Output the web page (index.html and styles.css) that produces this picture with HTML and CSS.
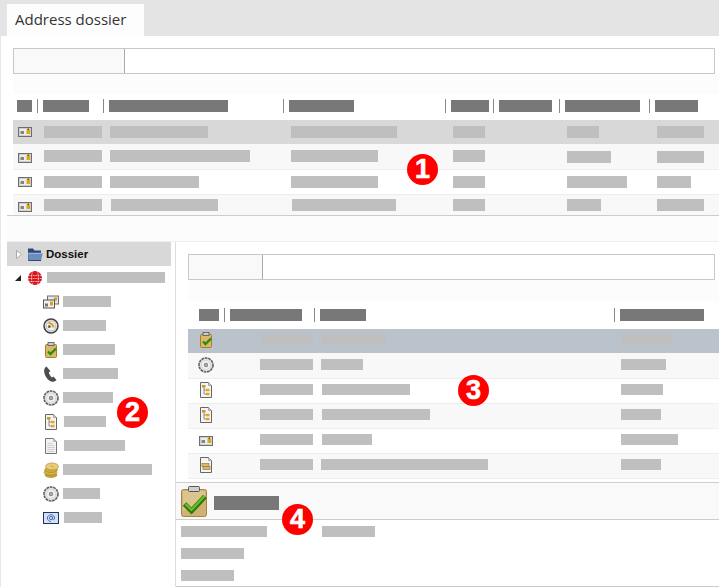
FILE: index.html

```html
<!DOCTYPE html>
<html lang="en">
<head>
  <meta charset="UTF-8" />
  <title>Address dossier</title>
  <link rel="stylesheet" href="styles.css">
</head>
<body>

  <svg class="defs" width="0" height="0">
    <symbol id="card" viewBox="0 0 14 10">
      <rect x="0.5" y="0.5" width="13" height="9" fill="#ececec" stroke="#6e6e6e"/>
      <rect x="1.500" y="1.500" width="11" height="7" fill="none" stroke="#bbb" stroke-width="0.6"/>
      <rect x="2.500" y="4" width="3.500" height="3" fill="#858585"/>
      <rect x="8.500" y="2.500" width="3.500" height="4.500" fill="#dca814"/>
      <rect x="9.500" y="1.500" width="1.500" height="1.500" fill="#5e5020"/>
    </symbol>
    <symbol id="cards" viewBox="0 0 16 13">
      <rect x="4.5" y="0.5" width="11" height="8" fill="#e6e6e6" stroke="#6e6e6e"/>
      <rect x="11" y="2" width="3" height="3" fill="#c9a030"/>
      <rect x="0.5" y="4.5" width="11" height="8" fill="#f0f0f0" stroke="#555"/>
      <rect x="2" y="8" width="3" height="3" fill="#777"/>
      <rect x="7" y="6" width="3" height="4" fill="#d9a514"/>
    </symbol>
    <symbol id="clock" viewBox="0 0 16 16">
      <circle cx="8" cy="8" r="7" fill="#e2e2e2" stroke="#444" stroke-width="1.500"/>
      <circle cx="8" cy="8" r="4.800" fill="#f2f2f2" stroke="#aaa" stroke-width="0.6"/>
      <path d="M5.500 5a5 5 0 0 1 5 4.500" fill="none" stroke="#e09a10" stroke-width="2"/>
      <circle cx="6.300" cy="8.600" r="1.500" fill="#6a6a6a"/>
    </symbol>
    <symbol id="clip" viewBox="0 0 16 16">
      <rect x="2.5" y="2.5" width="11" height="13" rx="1" fill="#d9b869" stroke="#a97f24"/>
      <rect x="5" y="0.5" width="6" height="3" fill="#ccc" stroke="#555" stroke-width="0.8"/>
      <path d="M5 9.500l2.500 2.500 5.500-5.500" fill="none" stroke="#2f8a14" stroke-width="2.400"/>
    </symbol>
    <symbol id="phone" viewBox="0 0 16 16">
      <path d="M3.500 0.500c-1.800 1-2.800 3-2.200 6C2 10.200 4.500 14 8 15.500c2.200.7 4.200 0 5.500-1.500L10.500 10.500 8.800 11.400C7.300 10.200 6.200 8.300 5.800 6.300L7.500 5.300z" fill="#4d4d4d"/>
    </symbol>
    <symbol id="disc" viewBox="0 0 16 16">
      <circle cx="8" cy="8" r="7" fill="#e4e4e4" stroke="#5f5f5f" stroke-width="1.600" stroke-dasharray="2.800 .7"/>
      <circle cx="8" cy="8" r="4.600" fill="#f0f0f0" stroke="#ccc" stroke-width="0.6"/>
      <circle cx="8" cy="8" r="2.200" fill="#8a8a8a"/>
      <circle cx="8" cy="8" r="0.800" fill="#ddd"/>
    </symbol>
    <symbol id="doctree" viewBox="0 0 16 16">
      <path d="M2.500.5h8l3 3v12h-11z" fill="#f4f4f4" stroke="#666"/>
      <path d="M10.500.5v3h3" fill="#ccc" stroke="#888" stroke-width="0.6"/>
      <path d="M6 4v8h3M6 8h3" fill="none" stroke="#777" stroke-width="0.8"/>
      <rect x="4" y="3" width="3.500" height="2.500" fill="#c9982a"/>
      <rect x="8" y="6.800" width="3.500" height="2.500" fill="#e0a81e"/>
      <rect x="8" y="10.800" width="3.500" height="2.500" fill="#e0a81e"/>
    </symbol>
    <symbol id="doc" viewBox="0 0 16 16">
      <path d="M2.500.5h8l3 3v12h-11z" fill="#f2f2f2" stroke="#777"/>
      <path d="M10.500.5v3h3" fill="#ccc" stroke="#999" stroke-width="0.6"/>
      <path d="M4.500 5.500h5M4.500 7.500h7M4.500 9.500h7M4.500 11.500h7M4.500 13.500h7" stroke="#c4c4c4" stroke-width="0.8"/>
    </symbol>
    <symbol id="docfolder" viewBox="0 0 16 16">
      <path d="M2.500.5h8l3 3v12h-11z" fill="#f4f4f4" stroke="#666"/>
      <path d="M10.500.5v3h3" fill="#ccc" stroke="#888" stroke-width="0.6"/>
      <rect x="4" y="6.500" width="7" height="3" fill="#d6b978" stroke="#9a7a30" stroke-width="0.7"/>
      <rect x="5" y="9.500" width="7" height="3" fill="#d6b978" stroke="#9a7a30" stroke-width="0.7"/>
    </symbol>
    <symbol id="coins" viewBox="0 0 16 16">
      <ellipse cx="8" cy="13" rx="6" ry="2.500" fill="#c7a030" stroke="#a8852a" stroke-width="0.6"/>
      <ellipse cx="7.500" cy="10.500" rx="6.500" ry="2.500" fill="#d6b44a" stroke="#a8852a" stroke-width="0.6"/>
      <ellipse cx="8" cy="8" rx="6.500" ry="2.500" fill="#d0ac3c" stroke="#a8852a" stroke-width="0.6"/>
      <ellipse cx="9" cy="4.500" rx="6.500" ry="3.500" fill="#e6cc78" stroke="#a8852a" stroke-width="0.6"/>
      <path d="M8 3.500l2 2" stroke="#b8962f"/>
    </symbol>
    <symbol id="mail" viewBox="0 0 16 12">
      <rect x="0.500" y="0.500" width="15" height="11" fill="#d5e0f2" stroke="#1d3566"/>
      <circle cx="8" cy="6" r="1.600" fill="none" stroke="#4a6fb0"/>
      <path d="M9.600 4.500v2.500c0 1 2 1 2-.8 0-2.200-1.700-3.500-3.600-3.500S4.400 4 4.400 6s1.700 3.500 3.600 3.500" fill="none" stroke="#4a6fb0"/>
    </symbol>
    <symbol id="folder" viewBox="0 0 16 14">
      <path d="M1 1.500h5l1.500 2H14v10H1z" fill="#2f4a78"/>
      <path d="M1 6h14.800L14 13.500H1.500z" fill="#6b8cbd"/>
      <path d="M1.500 6.300h13.800" stroke="#a9c0e0"/>
      <path d="M1.500 13.500H14" stroke="#2f4a78"/>
    </symbol>
    <symbol id="globe" viewBox="0 0 14 14">
      <circle cx="7" cy="7" r="7" fill="#d8141c"/>
      <path d="M0 4.500h14M0 7.500h14M0 10.500h14M4.700 0c-1.500 4-1.500 10 0 14M9.300 0c1.500 4 1.500 10 0 14" fill="none" stroke="#fff" stroke-width="0.6" stroke-dasharray="1.800 .6"/>
    </symbol>
    <symbol id="clipbig" viewBox="0 0 26 31">
      <rect x="0.500" y="3.500" width="25" height="27" rx="2" fill="#cfb170" stroke="#a5854a"/>
      <path d="M2 5h22v10L2 25z" fill="#dcc48e"/>
      <rect x="7.500" y="0.500" width="11" height="5" rx="1" fill="#cfcfcf" stroke="#555"/>
      <path d="M3.500 18l7 7L24 10.500" fill="none" stroke="#2c7a10" stroke-width="5"/>
      <path d="M4.500 18l6 6L23.500 10" fill="none" stroke="#6cc024" stroke-width="2.200"/>
    </symbol>
  </svg>

  <div class="tabs"><div class="tab">Address dossier</div></div>

  <div class="content">

    <div class="top-panel">
      <div class="filter"><div class="filter-label"></div></div>
      <div class="band"></div>
      <div class="head head-top">
        <div class="hcell"><i class="hbar" style="width:15px"></i></div>
        <div class="hcell"><i class="hbar" style="width:46px"></i></div>
        <div class="hcell"><i class="hbar" style="width:119px"></i></div>
        <div class="hcell"><i class="hbar" style="width:65px"></i></div>
        <div class="hcell"><i class="hbar" style="width:38px"></i></div>
        <div class="hcell"><i class="hbar" style="width:53px"></i></div>
        <div class="hcell"><i class="hbar" style="width:75px"></i></div>
        <div class="hcell"><i class="hbar" style="width:43px"></i></div>
      </div>
      <div class="table-top">
        <div class="row row-sel">
          <svg class="ico-card"><use href="#card"/></svg>
          <i class="bar" style="width:58px"></i><i class="bar" style="width:98px"></i><i class="bar" style="width:106px"></i>
          <i class="bar" style="width:32px"></i><i class="bar" style="width:32px"></i><i class="bar" style="width:47px"></i>
        </div>
        <div class="row row-alt">
          <svg class="ico-card low"><use href="#card"/></svg>
          <i class="bar" style="width:58px"></i><i class="bar" style="width:140px"></i><i class="bar" style="width:87px"></i>
          <i class="bar" style="width:32px"></i><i class="bar down" style="width:44px"></i><i class="bar down" style="width:47px"></i>
        </div>
        <div class="row">
          <svg class="ico-card"><use href="#card"/></svg>
          <i class="bar" style="width:58px"></i><i class="bar" style="width:89px"></i><i class="bar" style="width:87px"></i>
          <i class="bar" style="width:32px"></i><i class="bar" style="width:60px"></i><i class="bar" style="width:34px"></i>
        </div>
        <div class="row row-alt row-last">
          <svg class="ico-card low"><use href="#card"/></svg>
          <i class="bar" style="width:58px"></i><i class="bar nudge" style="width:107px"></i><i class="bar nudge" style="width:104px"></i>
          <i class="bar" style="width:32px"></i><i class="bar" style="width:34px"></i><i class="bar" style="width:47px"></i>
        </div>
      </div>
    </div>

    <div class="gap"></div>

    <div class="split">
      <div class="tree">
        <div class="tree-root">
          <svg class="tri-open" viewBox="0 0 6 9"><path d="M.5.500l5 4-5 4z" fill="#fff" stroke="#aaa"/></svg>
          <svg class="ico-folder"><use href="#folder"/></svg>
          <span class="tree-title">Dossier</span>
        </div>
        <div class="tree-site">
          <svg class="tri-down" viewBox="0 0 6 6"><path d="M6 0v6H0z" fill="#222"/></svg>
          <svg class="ico-globe"><use href="#globe"/></svg>
          <i class="tbar bar-site" style="width:118px"></i>
        </div>
        <div class="tree-item"><svg class="ico"><use href="#cards"/></svg><i class="tbar" style="width:48px"></i></div>
        <div class="tree-item"><svg class="ico"><use href="#clock"/></svg><i class="tbar" style="width:43px"></i></div>
        <div class="tree-item"><svg class="ico"><use href="#clip"/></svg><i class="tbar" style="width:52px"></i></div>
        <div class="tree-item"><svg class="ico"><use href="#phone"/></svg><i class="tbar" style="width:55px"></i></div>
        <div class="tree-item"><svg class="ico"><use href="#disc"/></svg><i class="tbar" style="width:50px"></i></div>
        <div class="tree-item"><svg class="ico"><use href="#doctree"/></svg><i class="tbar nudge" style="width:42px"></i></div>
        <div class="tree-item"><svg class="ico"><use href="#doc"/></svg><i class="tbar nudge" style="width:61px"></i></div>
        <div class="tree-item"><svg class="ico"><use href="#coins"/></svg><i class="tbar" style="width:89px"></i></div>
        <div class="tree-item"><svg class="ico"><use href="#disc"/></svg><i class="tbar" style="width:37px"></i></div>
        <div class="tree-item"><svg class="ico"><use href="#mail"/></svg><i class="tbar nudge" style="width:38px"></i></div>
      </div>

      <div class="detail">
        <div class="detail-top">
          <div class="filter filter-detail"><div class="filter-label filter-label-detail"></div></div>
          <div class="band band-detail"></div>
          <div class="head head-detail">
            <div class="hcell"><i class="hbar" style="width:20px"></i></div>
            <div class="hcell"><i class="hbar" style="width:72px"></i></div>
            <div class="hcell"><i class="hbar" style="width:46px"></i></div>
            <div class="hcell"><i class="hbar" style="width:84px"></i></div>
          </div>
          <div class="table-detail">
            <div class="drow drow-sel">
              <svg class="ico"><use href="#clip"/></svg>
              <i class="dbar nudge" style="width:52px"></i><i class="dbar nudge" style="width:64px"></i><i class="dbar" style="width:51px"></i>
            </div>
            <div class="drow drow-alt drow-second">
              <svg class="ico"><use href="#disc"/></svg>
              <i class="dbar" style="width:53px"></i><i class="dbar" style="width:42px"></i><i class="dbar" style="width:45px"></i>
            </div>
            <div class="drow">
              <svg class="ico"><use href="#doctree"/></svg>
              <i class="dbar" style="width:53px"></i><i class="dbar nudge" style="width:88px"></i><i class="dbar" style="width:42px"></i>
            </div>
            <div class="drow drow-alt">
              <svg class="ico"><use href="#doctree"/></svg>
              <i class="dbar" style="width:53px"></i><i class="dbar nudge" style="width:108px"></i><i class="dbar" style="width:40px"></i>
            </div>
            <div class="drow">
              <svg class="ico-card drow-card"><use href="#card"/></svg>
              <i class="dbar" style="width:53px"></i><i class="dbar nudge" style="width:50px"></i><i class="dbar" style="width:57px"></i>
            </div>
            <div class="drow drow-alt">
              <svg class="ico"><use href="#docfolder"/></svg>
              <i class="dbar" style="width:53px"></i><i class="dbar" style="width:167px"></i><i class="dbar" style="width:40px"></i>
            </div>
          </div>
        </div>

        <div class="summary">
          <svg class="ico-big"><use href="#clipbig"/></svg>
          <i class="summary-bar"></i>
        </div>
        <div class="fields">
          <div class="field"><i class="dbar" style="width:86px"></i><i class="dbar" style="width:53px"></i></div>
          <div class="field"><i class="dbar" style="width:63px"></i></div>
          <div class="field"><i class="dbar" style="width:53px"></i></div>
        </div>
      </div>
    </div>
  </div>

  <div class="badge badge-1">1</div>
  <div class="badge badge-2">2</div>
  <div class="badge badge-3">3</div>
  <div class="badge badge-4">4</div>

</body>
</html>
```

FILE: styles.css

```css
html, body {
  margin: 0;
  height: 100%;
}
body {
  position: relative;
  width: 719px;
  height: 587px;
  overflow: hidden;
  background: #fff;
  font-family: "Open Sans", sans-serif;
  color: #333;
}
i {
  display: block;
}
svg {
  display: block;
  flex: none;
}
.defs {
  position: absolute;
}

/* tabs */
.tabs {
  height: 36px;
  padding: 4px 0 0 7px;
  box-sizing: border-box;
  background: #e4e4e4;
}
.tab {
  width: 137px;
  height: 32px;
  padding-left: 8px;
  box-sizing: border-box;
  background: #fdfdfd;
  font-size: 15px;
  line-height: 31px;
}

.content {
  height: 551px;
  border-left: 1px solid #e8e8e8;
}

/* filter + header */
.top-panel {
  padding: 12px 0 0 12px;
}
.filter {
  display: flex;
  width: 702px;
  height: 26px;
  box-sizing: border-box;
  border: 1px solid #c8c8c8;
}
.filter-label {
  width: 110px;
  background: #f9f9f9;
  border-right: 1px solid #aaa;
}
.band {
  height: 20px;
  background: #fcfcfc;
}
.head {
  display: grid;
  height: 26px;
  padding-top: 5px;
  box-sizing: border-box;
}
.head-top {
  grid-template-columns: 24px 66px 180px 162px 48px 66px 90px 1fr;
}
.hcell {
  height: 14px;
  padding: 1px 0 0 5px;
  box-sizing: border-box;
  border-left: 1px solid #888;
}
.hcell:first-child {
  padding-left: 4px;
  border-left: 0;
}
.hbar {
  height: 12px;
  background: #787878;
}

/* top table */
.row {
  display: grid;
  grid-template-columns: 31px 66px 181px 162px 114px 90px 1fr;
  align-items: start;
  height: 25px;
  padding-top: 6px;
  box-sizing: border-box;
  border-bottom: 1px solid #eee;
}
.row-sel {
  height: 24px;
  background: #d8d8d8;
  border-bottom: 0;
}
.row-alt {
  height: 26px;
  background: #f8f8f8;
}
.row-last {
  height: 20px;
  padding-top: 4px;
  border-bottom: 0;
}
.bar {
  height: 12px;
  background: #bfbfbf;
}
.ico-card {
  width: 14px;
  height: 10px;
  margin: 1px 0 0 5px;
}
.ico-card.low {
  margin-top: 3px;
}
.down {
  margin-top: 1px;
}
.nudge {
  margin-left: 1px;
}

.gap {
  height: 25px;
  margin-left: 6px;
  border-top: 1px solid #ccc;
  border-bottom: 1px solid #eee;
  background: #fcfcfc;
}

.split {
  display: flex;
  height: 345px;
}

/* tree */
.tree {
  width: 175px;
  box-sizing: border-box;
  padding-left: 6px;
  border-right: 1px solid #ddd;
}
.tree-root {
  display: flex;
  align-items: center;
  width: 164px;
  height: 24px;
  padding-left: 9px;
  box-sizing: border-box;
  background: #d8d8d8;
}
.tri-open {
  width: 6px;
  height: 9px;
}
.ico-folder {
  width: 16px;
  height: 14px;
  margin-left: 5px;
}
.tree-title {
  margin-left: 3px;
  font-family: "Liberation Sans", sans-serif;
  font-size: 11.5px;
  font-weight: bold;
  color: #111;
}
.tree-site {
  display: flex;
  align-items: center;
  height: 24px;
  padding-left: 8px;
}
.tri-down {
  width: 6px;
  height: 6px;
}
.ico-globe {
  width: 14px;
  height: 14px;
  margin-left: 7px;
}
.tbar {
  height: 11px;
  background: #bfbfbf;
  align-self: flex-start;
  margin-top: 6px;
}
.bar-site {
  margin-left: 5px;
}
.tree-item {
  display: flex;
  align-items: center;
  height: 24px;
  padding-left: 36px;
}
.tree-item .ico {
  width: 16px;
  height: 16px;
  margin-right: 4px;
}

/* detail side */
.detail {
  flex: 1;
}
.detail-top {
  height: 240px;
  padding: 12px 0 0 12px;
  box-sizing: border-box;
}
.filter-detail {
  width: 527px;
}
.filter-label-detail {
  width: 73px;
}
.band-detail {
  height: 21px;
}
.head-detail {
  grid-template-columns: 36px 90px 300px 1fr;
  height: 28px;
  padding-top: 7px;
}
.head-detail .hcell:first-child {
  padding-left: 11px;
}
.drow {
  display: grid;
  grid-template-columns: 72px 61px 300px 1fr;
  align-items: start;
  height: 25px;
  padding-top: 5px;
  box-sizing: border-box;
  border-bottom: 1px solid #eee;
}
.drow .ico {
  width: 16px;
  height: 16px;
  margin: -2px 0 0 10px;
}
.drow .drow-card {
  margin: 2px 0 0 11px;
}
.drow-sel {
  height: 24px;
  background: #bac2cc;
  border-bottom: 0;
}
.drow-alt {
  background: #f8f8f8;
}
.drow-second {
  height: 26px;
  padding-top: 6px;
}
.dbar {
  height: 11px;
  background: #bfbfbf;
}
.summary {
  display: flex;
  height: 38px;
  padding: 3px 0 0 5px;
  box-sizing: border-box;
  background: #f9f9f9;
  border-top: 1px solid #ccc;
  border-bottom: 1px solid #ccc;
}
.ico-big {
  width: 26px;
  height: 31px;
}
.summary-bar {
  width: 65px;
  height: 14px;
  margin: 10px 0 0 7px;
  background: #787878;
}
.fields {
  height: 67px;
  padding: 6px 0 0 5px;
  box-sizing: border-box;
  border-bottom: 1px solid #ccc;
}
.field {
  display: grid;
  grid-template-columns: 141px 1fr;
  height: 22px;
}

/* callouts over the screenshot */
.badge {
  position: absolute;
  width: 31px;
  height: 31px;
  border-radius: 50%;
  background: #f00;
  color: #fff;
  font-family: "Liberation Sans", sans-serif;
  font-size: 27px;
  font-weight: bold;
  line-height: 31px;
  text-align: center;
  -webkit-text-stroke: 0.6px #fff;
}
.badge-1 { left: 407px; top: 154px; }
.badge-2 { left: 117px; top: 397px; }
.badge-3 { left: 458px; top: 375px; }
.badge-4 { left: 282px; top: 504px; }
```
